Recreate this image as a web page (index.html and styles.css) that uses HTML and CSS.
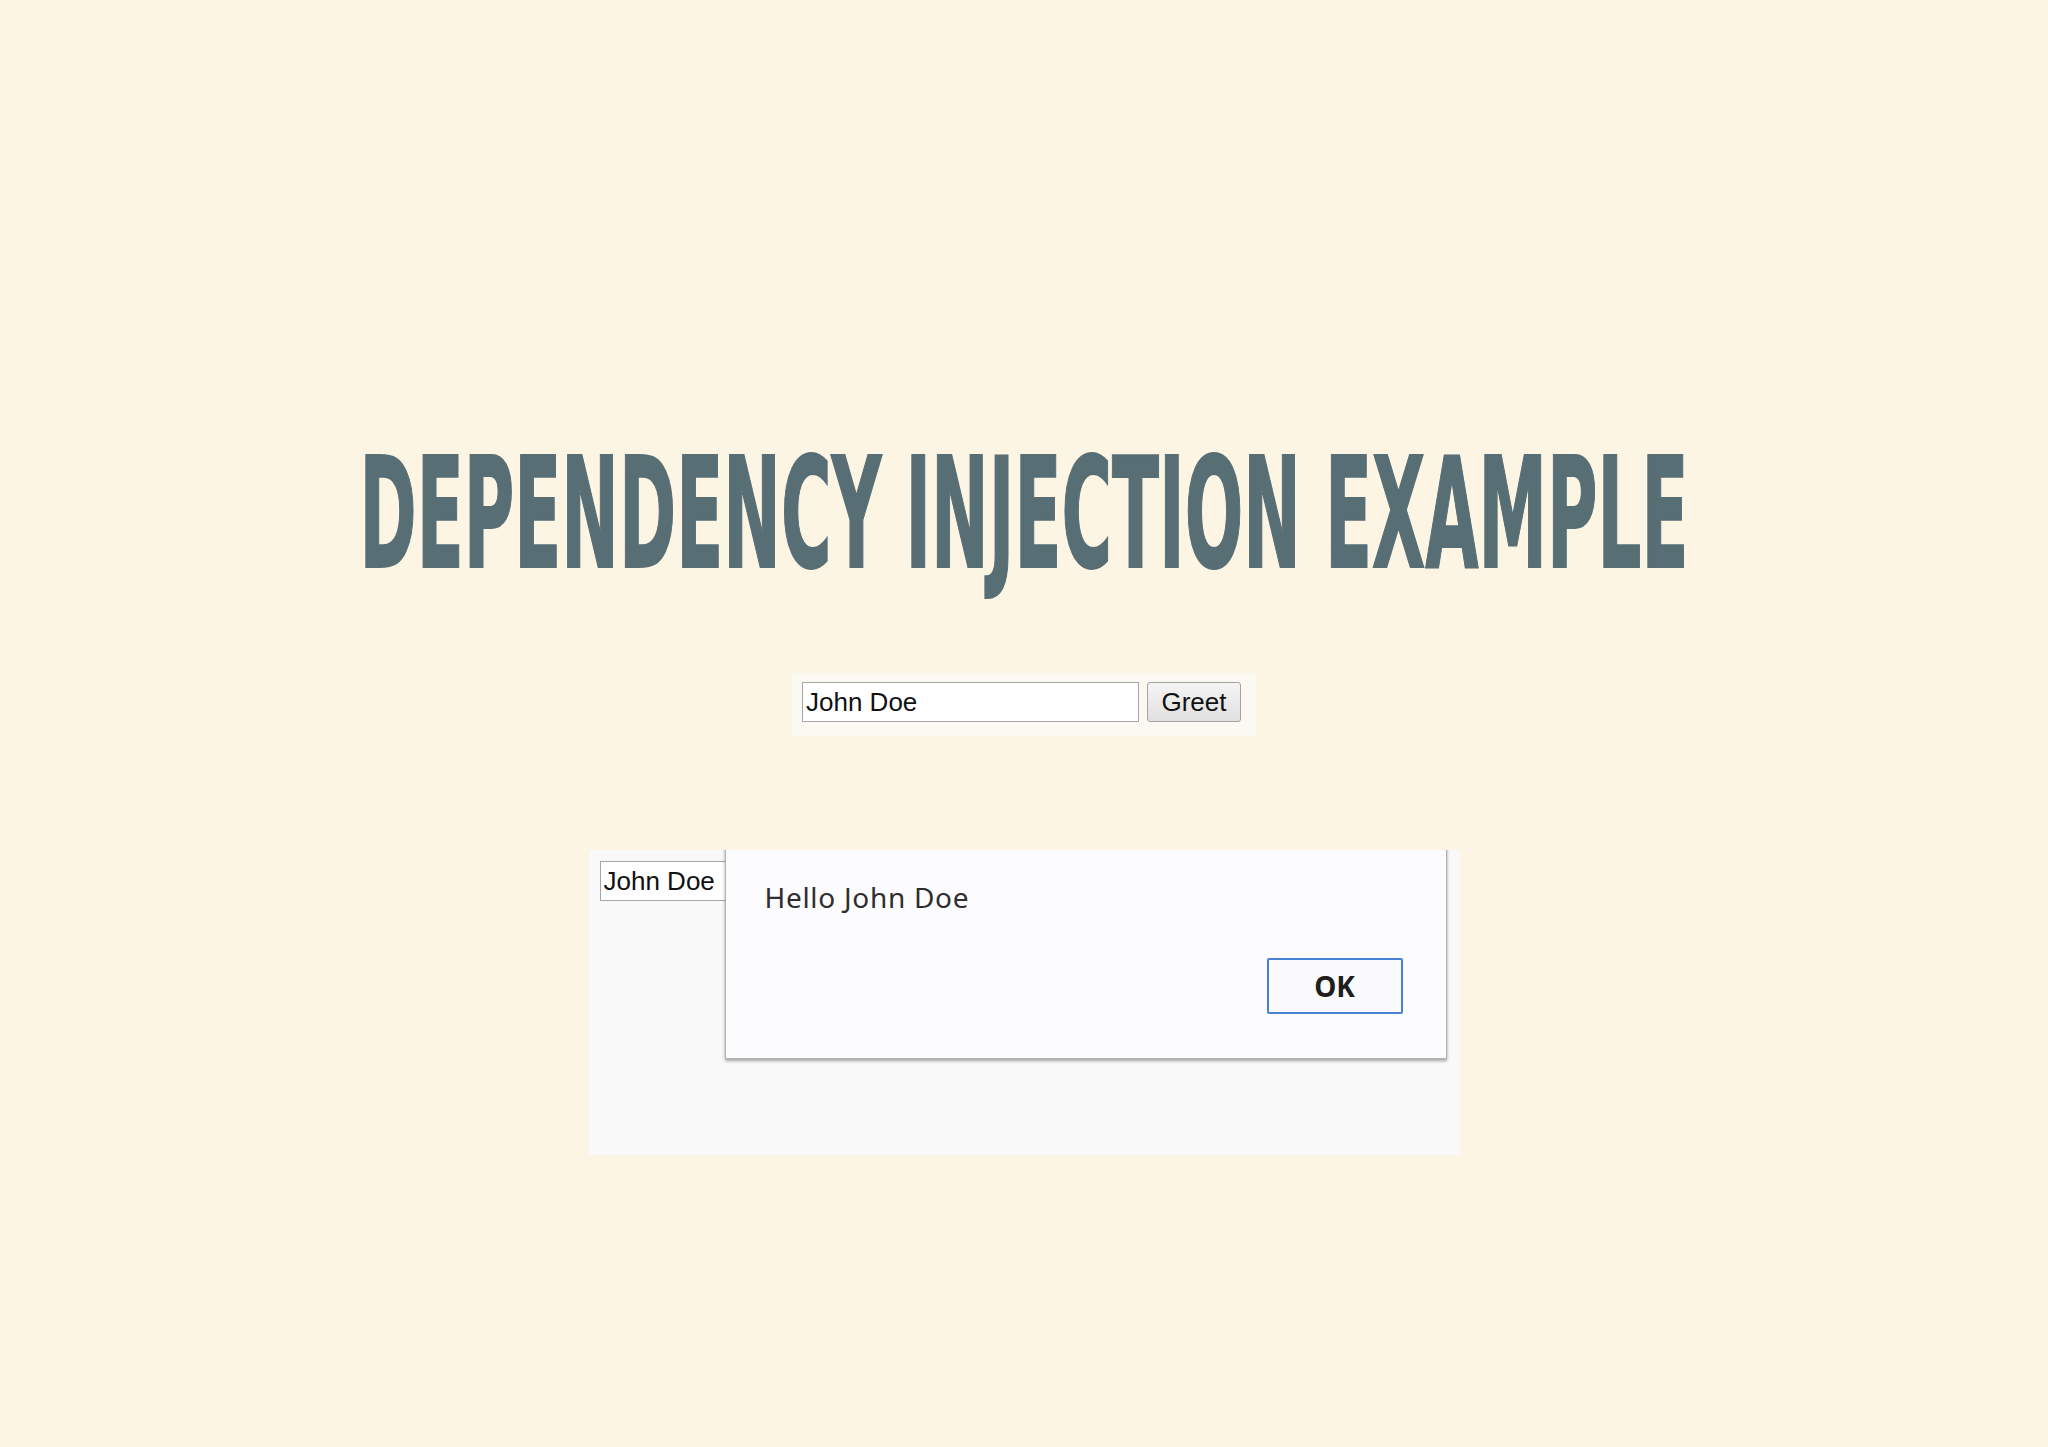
FILE: index.html
```html
<!DOCTYPE html>
<html lang="en">
<head>
<meta charset="utf-8">
<title>Dependency Injection Example</title>
<link rel="stylesheet" href="styles.css">
</head>
<body>
<main class="page">
  <h1 class="title"><span class="title-text">DEPENDENCY INJECTION EXAMPLE</span></h1>
  <div class="form-panel">
    <input class="name-input" type="text" value="John Doe">
    <button class="greet-btn" type="button">Greet</button>
  </div>
  <div class="demo-panel">
    <input class="name-input small" type="text" value="John Doe">
    <div class="dialog">
      <p class="dialog-msg">Hello John Doe</p>
      <div class="dialog-actions">
        <button class="ok-btn" type="button">OK</button>
      </div>
    </div>
  </div>
</main>
</body>
</html>
```
FILE: styles.css
```css
html, body {
  margin: 0;
  padding: 0;
}
body {
  background: #fdf5e4;
  width: 2048px;
  height: 1447px;
  overflow: hidden;
  font-family: "Liberation Sans", Arial, sans-serif;
}
.page {
  display: flex;
  flex-direction: column;
  align-items: center;
  padding-top: 437px;
}
.title {
  margin: 0;
  height: 154px;
  width: 2048px;
  display: flex;
  justify-content: center;
  font-family: "DejaVu Sans", sans-serif;
  font-weight: bold;
  font-size: 154px;
  line-height: 1;
  color: #586e75;
  white-space: nowrap;
}
.title-text {
  flex: none;
  display: block;
  transform: scaleX(0.4475);
  transform-origin: center;
  -webkit-text-stroke: 2px #586e75;
}
.form-panel {
  margin-top: 82px;
  width: 464px;
  height: 63px;
  box-sizing: border-box;
  padding: 9px 15px 14px 10px;
  background: #fcf9f2;
  display: flex;
  gap: 8px;
  align-items: flex-start;
}
.name-input {
  width: 337px;
  height: 40px;
  box-sizing: border-box;
  border: 1px solid #a6a6a6;
  padding: 0 3px;
  margin: 0;
  font-family: "Liberation Sans", Arial, sans-serif;
  font-size: 26px;
  color: #111;
  background: #fff;
  outline: none;
}
.greet-btn {
  width: 94px;
  height: 40px;
  box-sizing: border-box;
  margin: 0;
  padding: 0;
  border: 1px solid #a3a3a3;
  border-radius: 3px;
  background: linear-gradient(#f4f4f4, #e0e0e0);
  font-family: "Liberation Sans", Arial, sans-serif;
  font-size: 26px;
  color: #111;
}
.demo-panel {
  position: relative;
  margin-top: 114px;
  width: 871px;
  height: 305px;
  box-sizing: border-box;
  padding: 11px;
  background: #f9f9fa;
  overflow: hidden;
}
.name-input.small {
  height: 40px;
}
.dialog {
  position: absolute;
  left: 136px;
  top: -10px;
  width: 722px;
  box-sizing: border-box;
  padding: 38px 43px 44px 39px;
  background: #fcfbfd;
  border: 1px solid #b3b3b3;
  box-shadow: 0 2px 3px rgba(0, 0, 0, 0.35);
  font-family: "Noto Sans", "Open Sans", sans-serif;
}
.dialog-msg {
  margin: 0;
  font-size: 28px;
  line-height: 1.3;
  letter-spacing: 0.7px;
  color: #2e2e2e;
}
.dialog-actions {
  display: flex;
  justify-content: flex-end;
  margin-top: 43px;
}
.ok-btn {
  width: 136px;
  height: 56px;
  box-sizing: border-box;
  margin: 0;
  padding: 0;
  border: 2px solid #4a7fd8;
  border-radius: 2px;
  background: #fbfbfd;
  font-family: "Noto Sans", "Open Sans", sans-serif;
  font-weight: bold;
  font-size: 28px;
  color: #1e1e1e;
}
```
